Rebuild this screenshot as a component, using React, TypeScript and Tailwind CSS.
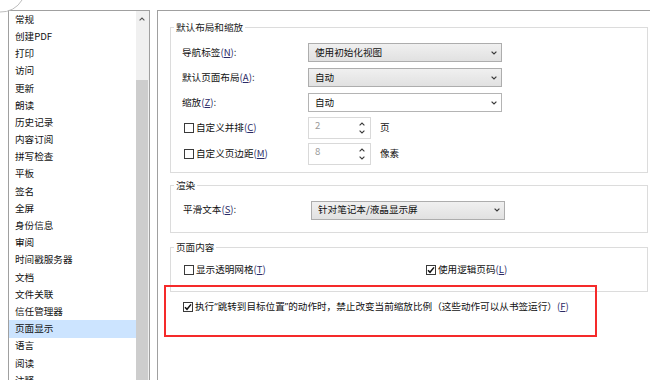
import type { ReactNode } from 'react'

const listItems = [
  '常规',
  '创建PDF',
  '打印',
  '访问',
  '更新',
  '朗读',
  '历史记录',
  '内容订阅',
  '拼写检查',
  '平板',
  '签名',
  '全屏',
  '身份信息',
  '审阅',
  '时间戳服务器',
  '文档',
  '文件关联',
  '信任管理器',
  '页面显示',
  '语言',
  '阅读',
  '注释',
]

function Mn({ k }: { k: string }) {
  return (
    <span className="text-[#2a2a66]">
      (<span className="underline underline-offset-1">{k}</span>)
    </span>
  )
}

function Check({ checked }: { checked?: boolean }) {
  return (
    <span className="flex h-[10px] w-[10px] shrink-0 items-center justify-center border border-[#3a3a3a] bg-white">
      {checked && (
        <svg width="8" height="8" viewBox="0 0 8 8">
          <path d="M1 4.2 L3 6.3 L7 1.4" fill="none" stroke="#111" strokeWidth="1.5" />
        </svg>
      )}
    </span>
  )
}

function Caret() {
  return (
    <svg width="6" height="4" viewBox="0 0 6 4" className="shrink-0">
      <path d="M0.6 0.6 L3 3 L5.4 0.6" fill="none" stroke="#3a3a3a" strokeWidth="1.2" />
    </svg>
  )
}

function Select({ value, gray }: { value: string; gray?: boolean }) {
  return (
    <div
      className={
        gray
          ? 'flex h-[19px] w-[194px] items-center justify-between border border-[#adadad] bg-gradient-to-b from-[#f0f0f0] to-[#e1e1e1] pl-[6px] pr-[4px]'
          : 'flex h-[19px] w-[194px] items-center justify-between border border-[#b4b4b4] bg-white pl-[6px] pr-[4px]'
      }
    >
      <span className="leading-none text-[#111]">{value}</span>
      <Caret />
    </div>
  )
}

function Spinner({ value }: { value: string }) {
  return (
    <div className="flex h-[22px] w-[63px] items-start justify-between border border-[#d9d9d9] bg-white pl-[6px] pr-[5px] pt-[3px]">
      <span className="leading-none text-[#9a9a9a]">{value}</span>
      <div className="flex flex-col gap-[4px] pt-[1px]">
        <svg width="6" height="4" viewBox="0 0 6 4">
          <path d="M0.6 3.4 L3 1 L5.4 3.4" fill="none" stroke="#3a3a3a" strokeWidth="1.1" />
        </svg>
        <svg width="6" height="4" viewBox="0 0 6 4">
          <path d="M0.6 0.6 L3 3 L5.4 0.6" fill="none" stroke="#3a3a3a" strokeWidth="1.1" />
        </svg>
      </div>
    </div>
  )
}

function Group({ title, children, className }: { title: string; children: ReactNode; className: string }) {
  return (
    <fieldset className={`border border-[#dcdcdc] ${className}`}>
      <legend className="ml-[3px] h-[14px] px-[2px] leading-[14px] text-[#1a1a1a]">{title}</legend>
      {children}
    </fieldset>
  )
}

export default function App() {
  return (
    <div className="relative h-[380px] w-[650px] overflow-hidden bg-white font-['Noto_Sans_CJK_SC','Noto_Sans',sans-serif] text-[9.6px] text-[#111]">
      {/* corner of the dialog's rounded button */}
      <svg width="26" height="16" viewBox="0 0 26 16" className="absolute left-0 top-0">
        <path d="M0 12 A24 24 0 0 0 22 0" fill="none" stroke="#bdbdbd" strokeWidth="1" />
      </svg>

      <div className="flex pl-[8px] pt-[10px]">
        {/* category list */}
        <div className="flex h-[376px] w-[142px] shrink-0 border border-[#a0a0a0]">
          <div className="flex flex-1 flex-col">
            {listItems.map((item) => (
              <div
                key={item}
                className={
                  item === '页面显示'
                    ? 'flex h-[17.2px] shrink-0 items-center bg-[#cce4ff] pl-[6px] leading-none'
                    : 'flex h-[17.2px] shrink-0 items-center pl-[6px] leading-none'
                }
              >
                {item}
              </div>
            ))}
          </div>
          <div className="flex w-[13px] flex-col bg-[#f0f0f0] pr-[1px]">
            <div className="flex h-[16px] items-center justify-center">
              <svg width="6" height="4" viewBox="0 0 6 4">
                <path d="M0.6 3.4 L3 1 L5.4 3.4" fill="none" stroke="#555" strokeWidth="1.1" />
              </svg>
            </div>
            <div className="mt-[53px] flex-1 bg-[#cdcdcd]" />
          </div>
        </div>

        {/* settings panel */}
        <div className="ml-[7px] flex h-[376px] flex-1 flex-col border-l border-t border-[#a0a0a0] pl-[12px] pr-[2px] pt-[9px]">
          <Group title="默认布局和缩放" className="pb-[5px] pt-[6px]">
            <div className="flex h-[25px] items-center pl-[11px]">
              <span className="w-[126px] leading-none">
                导航标签<Mn k="N" />:
              </span>
              <Select value="使用初始化视图" gray />
            </div>
            <div className="flex h-[25px] items-center pl-[11px]">
              <span className="w-[126px] leading-none">
                默认页面布局<Mn k="A" />:
              </span>
              <Select value="自动" gray />
            </div>
            <div className="flex h-[25px] items-center pl-[11px]">
              <span className="w-[126px] leading-none">
                缩放<Mn k="Z" />:
              </span>
              <Select value="自动" />
            </div>
            <div className="flex h-[26px] items-center pl-[11px]">
              <div className="flex w-[126px] items-center gap-[2px] pl-[2px]">
                <Check />
                <span className="leading-none">
                  自定义并排<Mn k="C" />
                </span>
              </div>
              <Spinner value="2" />
              <span className="ml-[9px] leading-none">页</span>
            </div>
            <div className="flex h-[26px] items-center pl-[11px]">
              <div className="flex w-[126px] items-center gap-[2px] pl-[2px]">
                <Check />
                <span className="leading-none">
                  自定义页边距<Mn k="M" />
                </span>
              </div>
              <Spinner value="8" />
              <span className="ml-[9px] leading-none">像素</span>
            </div>
          </Group>

          <Group title="渲染" className="mt-[5px] pb-[12px] pt-[8px]">
            <div className="flex h-[20px] items-center pl-[12px]">
              <span className="w-[128px] leading-none">
                平滑文本<Mn k="S" />:
              </span>
              <Select value="针对笔记本/液晶显示屏" gray />
            </div>
          </Group>

          <Group title="页面内容" className="mt-[7px] pb-[13px] pt-[8px]">
            <div className="flex h-[16px] items-center pl-[13px]">
              <div className="flex w-[242px] items-center gap-[2px]">
                <Check />
                <span className="leading-none">
                  显示透明网格<Mn k="T" />
                </span>
              </div>
              <div className="flex items-center gap-[2px]">
                <Check checked />
                <span className="leading-none">
                  使用逻辑页码<Mn k="L" />
                </span>
              </div>
            </div>
          </Group>

          <div className="mt-[7px] flex h-[16px] items-center gap-[2px] pl-[13px]">
            <Check checked />
            <span className="leading-none">
              执行<span className="font-['Noto_Sans',sans-serif]">“</span>跳转到目标位置
              <span className="font-['Noto_Sans',sans-serif]">”</span>的动作时，禁止改变当前缩放比例（这些动作可以从书签运行）
              <Mn k="F" />
            </span>
          </div>
        </div>
      </div>

      {/* red highlight annotation */}
      <div className="absolute left-[164px] top-[285px] h-[52px] w-[433px] border-2 border-[#f52a2a]" />
    </div>
  )
}
